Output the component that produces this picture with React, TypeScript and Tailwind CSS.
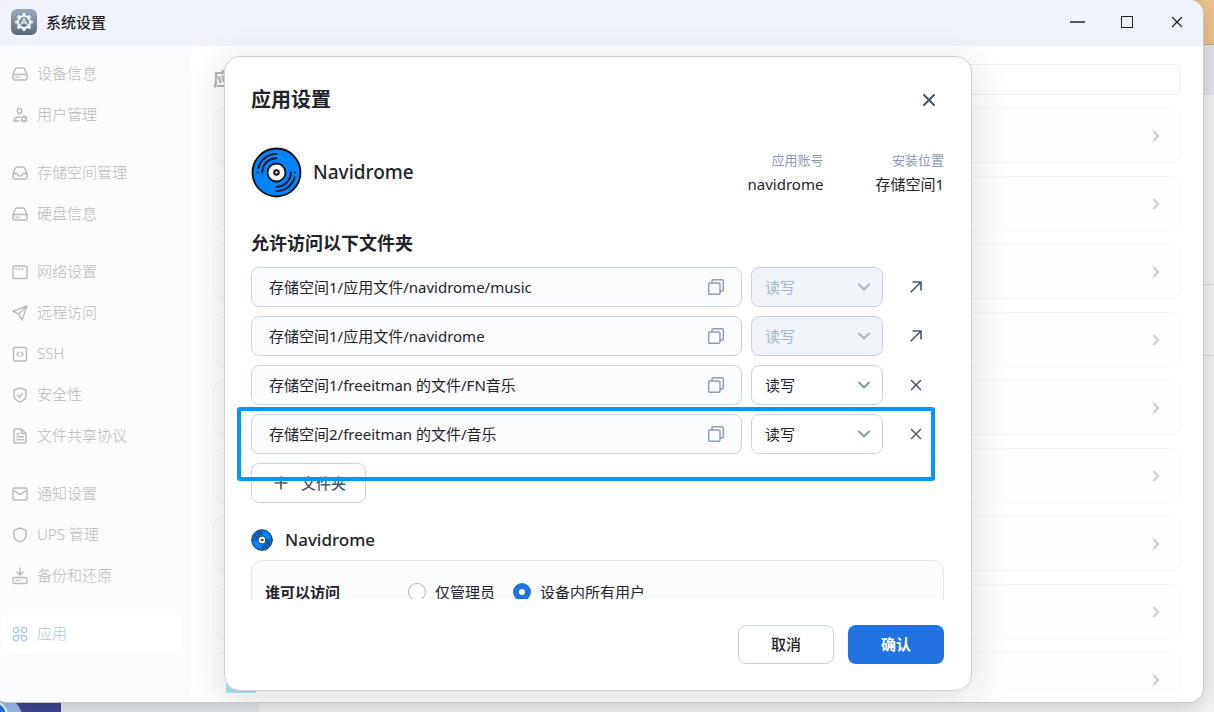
import React, { useState } from 'react';
import { ChevronDown, ChevronRight, Plus, X } from 'lucide-react';

type IconName =
  | 'device' | 'user' | 'storage' | 'network' | 'remote' | 'ssh'
  | 'security' | 'file' | 'mail' | 'ups' | 'backup' | 'apps';

const iconShapes: Record<IconName, React.ReactNode> = {
  device: (
    <>
      <path d="M1 8.500 3.200 3.200A2 2 0 0 1 5 2h6a2 2 0 0 1 1.800 1.200L15 8.500v3.800a1.700 1.700 0 0 1-1.700 1.700H2.700A1.700 1.700 0 0 1 1 12.300zM1.200 8.500h13.600" />
      <path d="M4 11.200h.6M6.400 11.200h.6" />
    </>
  ),
  user: (
    <>
      <ellipse cx="7.500" cy="4" rx="2.200" ry="2.800" />
      <path d="M8 10C4.500 10 2.200 11.500 1.800 14H7" />
      <circle cx="12" cy="12" r="2.200" />
      <path d="M12 8.800v1M12 14.200v1M9.200 10.400l.9.500M13.900 13.100l.9.500M9.200 13.600l.9-.5M13.900 10.900l.9-.5" />
    </>
  ),
  storage: (
    <path d="M1 8.500 3.200 3.200A2 2 0 0 1 5 2h6a2 2 0 0 1 1.800 1.200L15 8.500v3.800a1.700 1.700 0 0 1-1.700 1.700H2.700A1.700 1.700 0 0 1 1 12.300zM1.200 8.500h3.300c.7 0 .9 2.300 2.200 2.300h2.600c1.300 0 1.500-2.300 2.200-2.300h3.300" />
  ),
  network: (
    <>
      <rect x="1" y="2" width="14" height="12.500" rx="1.500" />
      <path d="M3.500 5h1M6.500 5h1M9.500 5h1" />
    </>
  ),
  remote: <path d="M15 1 1 6.200l5.300 3L10 15zM15 1 6.300 9.200" />,
  ssh: (
    <>
      <rect x="1.500" y="1.500" width="13" height="13.500" rx="1.500" />
      <path d="M6.500 6.300 5 8.200l1.500 1.900M9.500 6.300 11 8.200 9.500 10.100" />
    </>
  ),
  security: (
    <>
      <path d="M8 .8 14 3v5.500c0 3.300-2.700 5.300-6 6.700-3.300-1.400-6-3.400-6-6.700V3z" />
      <path d="m5.500 8 2 1.900 3.200-3.400" />
    </>
  ),
  file: (
    <>
      <path d="M3.500 1H9.500L14 5.500v8a1.500 1.500 0 0 1-1.500 1.500h-9A1.500 1.500 0 0 1 2 13.500v-11A1.500 1.500 0 0 1 3.500 1zM9.500 1v4.500H14" />
      <path d="M5 6h2M5 8.800h6.500M5 11.800h6.500" />
    </>
  ),
  mail: (
    <>
      <rect x="1" y="2" width="14" height="12" rx="1.500" />
      <path d="m1.500 4.500 6.500 4 6.500-4" />
    </>
  ),
  ups: <path d="M8 1 14 3.300v5.200c0 3.300-2.700 5.300-6 6.500-3.300-1.200-6-3.200-6-6.500V3.300z" />,
  backup: (
    <>
      <path d="M8 0v6.500M5 4l3 3 3-3" />
      <rect x="1" y="9.500" width="14" height="6" rx="1.500" />
      <path d="M4 12.500h.6M6.400 12.500h.6" />
    </>
  ),
  apps: (
    <>
      <circle cx="4" cy="4" r="2.600" />
      <circle cx="12" cy="4" r="2.600" />
      <path d="M4 9.500h2.600V12A2.600 2.600 0 1 1 4 9.500zM12 9.500H9.400V12A2.600 2.600 0 1 0 12 9.500z" />
    </>
  ),
};

const menuGroups: { icon: IconName; label: string }[][] = [
  [
    { icon: 'device', label: '设备信息' },
    { icon: 'user', label: '用户管理' },
  ],
  [
    { icon: 'storage', label: '存储空间管理' },
    { icon: 'device', label: '硬盘信息' },
  ],
  [
    { icon: 'network', label: '网络设置' },
    { icon: 'remote', label: '远程访问' },
    { icon: 'ssh', label: 'SSH' },
    { icon: 'security', label: '安全性' },
    { icon: 'file', label: '文件共享协议' },
  ],
  [
    { icon: 'mail', label: '通知设置' },
    { icon: 'ups', label: 'UPS 管理' },
    { icon: 'backup', label: '备份和还原' },
  ],
  [{ icon: 'apps', label: '应用' }],
];

const folders = [
  { path: '存储空间1/应用文件/navidrome/music', builtIn: true },
  { path: '存储空间1/应用文件/navidrome', builtIn: true },
  { path: '存储空间1/freeitman 的文件/FN音乐', builtIn: false },
  { path: '存储空间2/freeitman 的文件/音乐', builtIn: false },
];

const gearTeeth = [0, 45, 90, 135, 180, 225, 270, 315];

const NavidromeLogo = ({ className }: { className: string }) => (
  <svg viewBox="0 0 50 50" className={className} fill="none" stroke="#111" strokeWidth="1.800" strokeLinecap="round">
    <circle cx="25" cy="25" r="23.500" fill="#0084ff" />
    <path d="M7.200 20.500A18.300 18.300 0 0 1 25 6.700M11 25A14 14 0 0 1 25 11" />
    <path d="M42.800 29.500A18.300 18.300 0 0 1 25 43.300M39 25a14 14 0 0 1-14 14" />
    <path d="M6.500 25h.2M43.300 25h.2" />
    <circle cx="25" cy="25" r="8.800" fill="#fff" />
    <circle cx="25" cy="25" r="2.200" strokeWidth="2" />
  </svg>
);

const SettingsLogo = () => (
  <svg viewBox="0 0 26 26" className="size-[26px]">
    <defs>
      <linearGradient id="logo-bg" x1="0" y1="0" x2="0" y2="1">
        <stop offset="0" stopColor="#9aabc2" />
        <stop offset="1" stopColor="#5d6876" />
      </linearGradient>
    </defs>
    <rect width="26" height="26" rx="6" fill="url(#logo-bg)" />
    <g fill="#eef1f5">
      {gearTeeth.map((angle) => (
        <rect key={angle} x="11.400" y="4" width="3.200" height="4" rx="1" transform={`rotate(${angle} 13 13)`} />
      ))}
    </g>
    <g stroke="#eef1f5" fill="none">
      <circle cx="13" cy="13" r="6" strokeWidth="2.200" />
      <path d="M13 9.500 10.300 15M13 9.500l2.700 5.500M11.200 13.800h3.600M7.500 15.500l3 .5M15.500 16l3-.5" strokeWidth="1.200" />
    </g>
  </svg>
);

const CopyIcon = () => (
  <svg viewBox="0 0 16 16" className="size-4" fill="none" stroke="#8a9bb8" strokeWidth="1.400" strokeLinejoin="round">
    <rect x=".7" y="4" width="11.300" height="11.300" rx="1.200" />
    <path d="M4 4V1.900A1.200 1.200 0 0 1 5.200.7h8.900a1.200 1.200 0 0 1 1.200 1.200v8.900a1.200 1.200 0 0 1-1.200 1.200H12" />
  </svg>
);

const ArrowIcon = () => (
  <svg viewBox="0 0 12 12" className="size-3" fill="none" stroke="#4a566b" strokeWidth="1.600">
    <path d="M.7 11.300 11 1M2.500 1H11v8.500" />
  </svg>
);

const Sidebar = () => (
  <nav className="flex w-[198px] shrink-0 flex-col gap-[17px] px-[9px] pt-[7px]">
    {menuGroups.map((group, i) => (
      <ul key={i}>
        {group.map((item) => (
          <li key={item.label} className="h-[41px] py-px">
            <a
              href="#"
              className={`flex h-full items-center gap-[9px] rounded-lg px-2.5 text-[15px] font-light ${
                item.icon === 'apps' ? 'bg-white text-[#a9c8f2]' : 'text-[#b9babc]'
              }`}
            >
              <svg
                viewBox="0 0 16 16"
                className="size-4 shrink-0 overflow-visible"
                fill="none"
                stroke="currentColor"
                strokeWidth="1.400"
                strokeLinecap="round"
                strokeLinejoin="round"
              >
                {iconShapes[item.icon]}
              </svg>
              {item.label}
            </a>
          </li>
        ))}
      </ul>
    ))}
  </nav>
);

const AppList = () => (
  <main className="flex min-w-0 flex-1 flex-col overflow-hidden rounded-tl-xl bg-white px-[22px] pb-[9px] pt-[18px]">
    <div className="flex h-[31px] shrink-0 items-center justify-between">
      <h1 className="text-[18px] font-bold text-[#b3b4b6]">应用</h1>
      <input
        type="text"
        aria-label="搜索"
        className="h-full w-[240px] rounded-md border border-[#eff1f5] bg-white px-3 outline-none"
      />
    </div>
    <ul className="mt-[13px] flex min-h-0 flex-1 flex-col gap-[13px] overflow-hidden">
      {Array.from({ length: 9 }, (_, i) => (
        <li
          key={i}
          className="flex h-[55px] shrink-0 items-center justify-between rounded-[10px] border border-[#f5f6f8] bg-[#fefefe] pl-3 pr-[15px]"
        >
          <svg viewBox="0 0 30 40" className="h-10 w-[30px]" fill="#aee2f5">
            {i === 8 && <path d="M0 0h30v40H0z" />}
          </svg>
          <ChevronRight size={18} strokeWidth={2.5} className="text-[#c9ccd3]" />
        </li>
      ))}
    </ul>
  </main>
);

const FolderRow = ({ path, builtIn }: { path: string; builtIn: boolean }) => (
  <li className="flex items-center gap-[9px]">
    <div className="flex h-10 min-w-0 flex-1 items-center rounded-lg border border-[#c9d3e0] bg-[#fbfcfe] pl-[17px] pr-[17px]">
      <input
        readOnly
        value={path}
        aria-label="文件夹路径"
        className="min-w-0 flex-1 bg-transparent text-[15px] outline-none"
      />
      <button type="button" aria-label="复制">
        <CopyIcon />
      </button>
    </div>
    <div className="relative w-[132px] shrink-0">
      <select
        disabled={builtIn}
        aria-label="权限"
        className="h-10 w-full appearance-none rounded-lg border border-[#c9d3e0] bg-white px-[13px] text-[15px] disabled:bg-[#f0f3f8] disabled:text-[#a5b4ca] disabled:opacity-100"
      >
        <option>读写</option>
        <option>只读</option>
      </select>
      <ChevronDown
        size={20}
        strokeWidth={2.5}
        className={`pointer-events-none absolute right-[9px] top-2.5 ${builtIn ? 'text-[#a9b8ce]' : 'text-[#8496b4]'}`}
      />
    </div>
    <button
      type="button"
      aria-label={builtIn ? '打开' : '移除'}
      className="mr-1 flex h-10 w-12 shrink-0 items-center justify-center text-[#4a566b]"
    >
      {builtIn ? <ArrowIcon /> : <X size={18} strokeWidth={2} />}
    </button>
  </li>
);

const AppSettingsDialog = () => {
  const [access, setAccess] = useState('all');

  return (
    <div
      role="dialog"
      aria-label="应用设置"
      className="flex h-full w-[748px] max-w-full flex-col rounded-2xl border border-[#cfd1d4] bg-white shadow-[0_8px_40px_rgba(0,0,0,0.14)]"
    >
      <header className="flex h-[85px] shrink-0 items-center justify-between px-[26px]">
        <h2 className="text-[20px] font-bold">应用设置</h2>
        <button type="button" aria-label="关闭" className="mr-1.5 text-[#4a566b]">
          <X size={20} strokeWidth={2.5} />
        </button>
      </header>

      <div className="min-h-0 flex-1 overflow-y-auto pl-[26px] pr-[27px] [scrollbar-width:none]">
        <div className="flex h-[60px] items-center">
          <NavidromeLogo className="size-[51px]" />
          <span className="ml-[11px] text-[19px] font-medium">Navidrome</span>
          <dl className="ml-auto flex gap-[52px] text-right leading-6">
            <div>
              <dt className="text-[13px] text-[#8a9bb8]">应用账号</dt>
              <dd className="text-[15px]">navidrome</dd>
            </div>
            <div>
              <dt className="text-[13px] text-[#8a9bb8]">安装位置</dt>
              <dd className="text-[15px]">存储空间1</dd>
            </div>
          </dl>
        </div>

        <h3 className="mb-2.5 mt-7 text-[18px] font-bold leading-[27px]">允许访问以下文件夹</h3>
        <div className="relative">
          <ul className="flex flex-col gap-[9px]">
            {folders.map((folder) => (
              <FolderRow key={folder.path} {...folder} />
            ))}
          </ul>
          <button
            type="button"
            className="mt-[9px] flex h-10 w-[115px] items-center justify-center gap-2.5 rounded-lg border border-[#c9d3e0] text-[15px] font-medium text-[#4a566b]"
          >
            <Plus size={20} strokeWidth={2} />
            文件夹
          </button>
          {/* highlight around the newly added folder */}
          <div className="pointer-events-none absolute -left-3.5 bottom-[22px] right-[9px] h-[74px] rounded-[3px] border-4 border-[#0098ff]" />
        </div>

        <div className="mt-[22px] flex h-[30px] items-center">
          <NavidromeLogo className="size-[22px]" />
          <span className="ml-3 text-[17px] font-medium">Navidrome</span>
        </div>
        <fieldset className="mt-[5px] flex h-[120px] items-start rounded-xl border border-[#e1e6ee] bg-[#fbfcfe] px-[13px] pt-[19px] text-[15px] leading-6">
          <span className="w-[143px] font-bold">谁可以访问</span>
          <div className="flex gap-[18px]">
            {[
              { value: 'admin', label: '仅管理员' },
              { value: 'all', label: '设备内所有用户' },
            ].map((option) => (
              <label key={option.value} className="flex items-center gap-[9px]">
                <input
                  type="radio"
                  name="access"
                  value={option.value}
                  checked={access === option.value}
                  onChange={() => setAccess(option.value)}
                  className="size-[18px] appearance-none rounded-full border border-[#a9b8ce] bg-white checked:border-[6px] checked:border-[#2173e2]"
                />
                {option.label}
              </label>
            ))}
          </div>
        </fieldset>
      </div>

      <footer className="flex shrink-0 justify-end gap-3.5 px-[27px] pb-[26px] pt-[26px] text-[15px]">
        <button type="button" className="h-[39px] w-24 rounded-lg border border-[#c9d3e0] font-medium">
          取消
        </button>
        <button type="button" className="h-[39px] w-24 rounded-lg bg-[#2173e2] font-bold text-white">
          确认
        </button>
      </footer>
    </div>
  );
};

const App: React.FC = () => {
  return (
    <div className="relative h-screen overflow-hidden bg-[#f4f4f5] pb-2.5 pr-[11px] font-['Noto_Sans','Noto_Sans_CJK_SC',sans-serif] text-[#1f2329]">
      {/* desktop behind the window */}
      <div className="absolute inset-y-0 right-0 w-10">
        <div className="h-[45px] border-b border-[#d3a873] bg-[#efc48f]" />
        <div className="h-[50px] bg-[#e2e6ec]" />
        <div className="h-[190px] border-b border-[#d5dbe6]" />
        <div className="h-[71px] border-b border-[#d5dbe6]" />
      </div>
      <div className="absolute bottom-0 left-0 flex h-5 w-[259px] bg-[#e6e9ef]">
        <div className="relative w-[61px] overflow-hidden bg-[#3f4595]">
          <div className="absolute -left-10 top-0 size-16 rounded-full bg-[#9dbcec]" />
          <div className="absolute -left-6 top-2 size-8 rounded-full border-2 border-white bg-[#2173e2]" />
        </div>
      </div>

      <div className="relative -ml-[7px] flex h-full flex-col overflow-hidden rounded-b-[14px] rounded-tr-[14px] bg-[#fbfcfe] shadow-[0_0_0_1px_#c4c6c9,0_4px_24px_rgba(0,0,0,0.2)]">
        <header className="flex h-[46px] shrink-0 items-center bg-[#f0f3f9] px-[18px] pb-0.5">
          <SettingsLogo />
          <span className="ml-[9px] text-[15px] font-medium">系统设置</span>
          <div className="ml-auto flex items-center gap-[34px]">
            <button type="button" aria-label="最小化" className="flex size-4 items-center justify-center">
              <span className="h-0.5 w-[15px] bg-[#55585e]" />
            </button>
            <button type="button" aria-label="最大化" className="flex size-4 items-center justify-center">
              <span className="size-3 border border-[#1f2329]" />
            </button>
            <button type="button" aria-label="关闭窗口" className="flex size-4 items-center justify-center">
              <X size={18} strokeWidth={1.75} className="shrink-0" />
            </button>
          </div>
        </header>
        <div className="relative flex min-h-0 flex-1">
          <Sidebar />
          <AppList />
          <div className="absolute inset-0 flex justify-center pb-[11px] pt-2.5">
            <AppSettingsDialog />
          </div>
        </div>
      </div>
    </div>
  );
};

export default App;
